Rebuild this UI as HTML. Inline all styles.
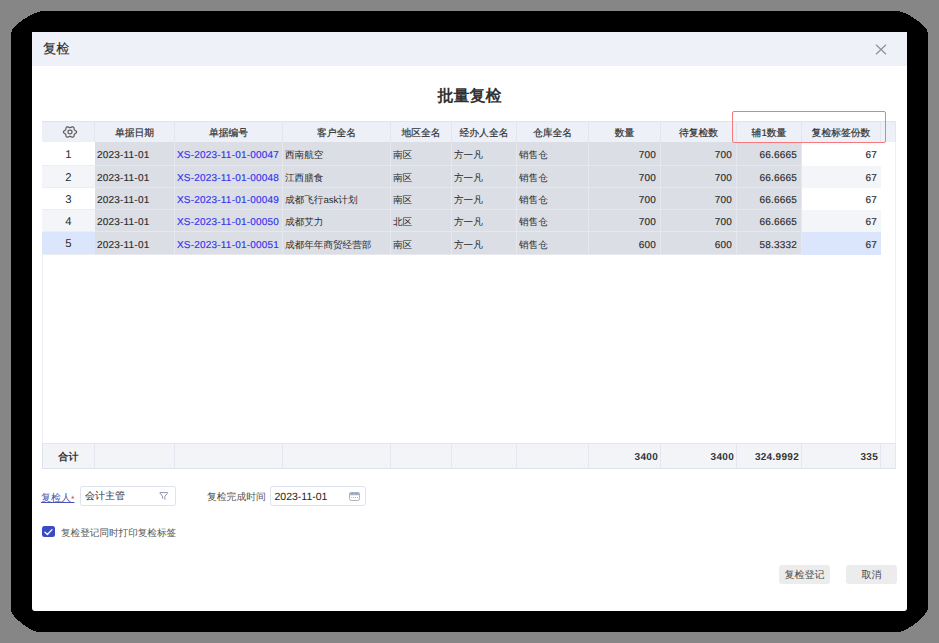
<!DOCTYPE html>
<html><head><meta charset="utf-8">
<style>
*{margin:0;padding:0;box-sizing:border-box}
html,body{width:939px;height:643px;overflow:hidden;background:#868686;text-rendering:geometricPrecision;font-family:"Liberation Sans",sans-serif;color:#333;position:relative}
body>*{position:absolute}
.frame{left:11px;top:11px;width:917px;height:621px}
.dlg{left:32px;top:32px;width:875px;height:579px;background:#fff;border-radius:0 0 3px 3px}
.hd{left:32px;top:32px;width:875px;height:34px;background:#eef1f8}
.hd .t{position:absolute;left:11px;top:9px;font-size:13.3px;line-height:16px;color:#2a2a2a;-webkit-text-stroke:0.15px #2a2a2a}
.x{left:875px;top:44px;width:12px;height:11px}
.title{left:32px;width:875px;top:87.3px;text-align:center;font-size:16px;line-height:20px;font-weight:bold;color:#333}
.tbl{left:42px;top:121px;width:854px;height:348px;border:1px solid #eceff5;background:#fff}
.c{font-size:10px;line-height:21px;white-space:nowrap;overflow:hidden}
.h{background:#edf0f7;text-align:center;color:#333;padding-top:1px;font-size:9.8px;-webkit-text-stroke:0.2px #333;border-right:1px solid #e2e6ee;border-top:1px solid #dfe3ec}
.h:first-of-type{}
.gear{position:absolute;left:20px;top:1.8px;width:16px;height:16px}
.ro{background:#dcdee5;border-right:1px solid #e6e8ee;border-bottom:1px solid #e6e8ee}
.odd{background:#fff}
.even{background:#f3f5f9}
.sel{background:#dbe5fb}
.num{text-align:center;font-size:11.3px;border-bottom:1px solid #eceef3}
.c.num{padding-top:1.2px}
.l{text-align:left;padding-left:2px}
.r{text-align:right;padding-right:4px}
.ctr{text-align:center}
.c.lk{color:#3232ee}
.ft{background:#f2f4f8;font-weight:bold;letter-spacing:0.3px;border-right:1px solid #e4e7ef;border-top:1px solid #e2e6ee;border-bottom:1px solid #dde2ec}
.ft.r{padding-right:2px}
.ft{padding-top:0.5px}
.redbox{left:732px;top:111px;width:154px;height:32px;border:1px solid #f6777c;border-radius:2px}
.lbl1{left:41px;top:491.5px;font-size:10px;line-height:14px;color:#4a53b6;text-decoration:underline}
.ast{color:#e04040;text-decoration:none;font-size:9px;vertical-align:top}
.inp{border:1px solid #dfe3ef;border-radius:3px;background:#fff}
.itxt{position:absolute;left:4px;top:3px;font-size:10px;line-height:13px;color:#333}
.num2{left:3.5px;font-size:10.5px;top:3.5px;color:#222}
.fil{position:absolute;left:78px;top:5.2px;width:11px;height:9px}
.cal{position:absolute;left:78px;top:5px;width:11px;height:9px}
.lbl2{left:207px;top:491px;font-size:9.8px;line-height:14px;color:#555}
.chk{left:42px;top:526px;width:13px;height:11px;background:#3b4bc5;border-radius:2.5px}
.chk svg{position:absolute;left:0;top:-0.5px;width:13px;height:12px}
.chklbl{left:61px;top:526.5px;font-size:9.6px;line-height:14px;color:#555}
.btn{height:19px;background:#ececec;border-radius:3px;text-align:center;font-size:10px;line-height:17.5px;padding-top:1.5px;color:#4a4a4a}

.zh{font-size:9.6px}
.nm{letter-spacing:0.2px;-webkit-text-stroke:0.15px currentColor}
.ro,.odd,.even,.sel{padding-top:1.5px;color:#2b2b2b}

</style></head><body>
<svg class="frame" width="917" height="621" viewBox="0 0 917 621" shape-rendering="crispEdges"><path d="M32 0H886C895.3 0 917 15.4 917 22V597C917 604.2 896 621 887 621H28C19.6 621 0 605.6 0 599V22C0 15.4 22.4 0 32 0Z" fill="#000"/></svg>
<div class="dlg"></div>
<div class="hd"><div class="t">复检</div></div>
<svg class="x" viewBox="0 0 12 11"><path d="M1 0.8L11 10.2M11 0.8L1 10.2" stroke="#8f949e" stroke-width="1.3" fill="none"/></svg>
<div class="title">批量复检</div>
<div class="tbl"></div>
<div class="c h" style="left:42px;top:121px;width:53px;height:21px"><svg class="gear" viewBox="0 0 16 16"><path d="M14.60 8.00 L14.47 8.49 L14.11 8.94 L13.60 9.31 L13.07 9.61 L12.63 9.88 L12.33 10.17 L12.18 10.55 L12.14 11.02 L12.10 11.57 L11.99 12.13 L11.72 12.63 L11.30 12.97 L10.74 13.12 L10.12 13.07 L9.50 12.87 L8.94 12.63 L8.45 12.43 L8.00 12.35 L7.55 12.43 L7.06 12.63 L6.50 12.87 L5.88 13.07 L5.26 13.12 L4.70 12.97 L4.28 12.63 L4.01 12.13 L3.90 11.57 L3.86 11.02 L3.82 10.55 L3.67 10.18 L3.37 9.88 L2.93 9.61 L2.40 9.31 L1.89 8.94 L1.53 8.49 L1.40 8.00 L1.53 7.51 L1.89 7.06 L2.40 6.69 L2.93 6.39 L3.37 6.12 L3.67 5.82 L3.82 5.45 L3.86 4.98 L3.90 4.43 L4.01 3.87 L4.28 3.37 L4.70 3.03 L5.26 2.88 L5.88 2.93 L6.50 3.13 L7.06 3.37 L7.55 3.57 L8.00 3.65 L8.45 3.57 L8.94 3.37 L9.50 3.13 L10.12 2.93 L10.74 2.88 L11.30 3.03 L11.72 3.37 L11.99 3.87 L12.10 4.43 L12.14 4.98 L12.18 5.45 L12.33 5.83 L12.63 6.12 L13.07 6.39 L13.60 6.69 L14.11 7.06 L14.47 7.51Z" fill="none" stroke="#5f5f5f" stroke-width="1.25"/><ellipse cx="8" cy="8" rx="2.05" ry="1.8" fill="none" stroke="#5f5f5f" stroke-width="1.25"/></svg></div>
<div class="c h" style="left:95px;top:121px;width:80px;height:21px">单据日期</div>
<div class="c h" style="left:175px;top:121px;width:108px;height:21px">单据编号</div>
<div class="c h" style="left:283px;top:121px;width:108px;height:21px">客户全名</div>
<div class="c h" style="left:391px;top:121px;width:61px;height:21px">地区全名</div>
<div class="c h" style="left:452px;top:121px;width:65px;height:21px">经办人全名</div>
<div class="c h" style="left:517px;top:121px;width:72px;height:21px">仓库全名</div>
<div class="c h" style="left:589px;top:121px;width:72px;height:21px">数量</div>
<div class="c h" style="left:661px;top:121px;width:76px;height:21px">待复检数</div>
<div class="c h" style="left:737px;top:121px;width:65px;height:21px">辅1数量</div>
<div class="c h" style="left:802px;top:121px;width:79px;height:21px">复检标签份数</div>
<div class="c h" style="left:881px;top:121px;width:15px;height:21px"></div>
<div class="c odd num" style="left:42px;top:142px;width:53px;height:24px;line-height:24px">1</div>
<div class="c ro l nm" style="left:95px;top:142px;width:80px;height:24px;line-height:24px">2023-11-01</div>
<div class="c ro l lk nm" style="left:175px;top:142px;width:108px;height:24px;line-height:24px">XS-2023-11-01-00047</div>
<div class="c ro l zh" style="left:283px;top:142px;width:108px;height:24px;line-height:24px">西南航空</div>
<div class="c ro l zh" style="left:391px;top:142px;width:61px;height:24px;line-height:24px">南区</div>
<div class="c ro l zh" style="left:452px;top:142px;width:65px;height:24px;line-height:24px">方一凡</div>
<div class="c ro l zh" style="left:517px;top:142px;width:72px;height:24px;line-height:24px">销售仓</div>
<div class="c ro r nm" style="left:589px;top:142px;width:72px;height:24px;line-height:24px">700</div>
<div class="c ro r nm" style="left:661px;top:142px;width:76px;height:24px;line-height:24px">700</div>
<div class="c ro r nm" style="left:737px;top:142px;width:65px;height:24px;line-height:24px">66.6665</div>
<div class="c odd r nm" style="left:802px;top:142px;width:79px;height:24px;line-height:24px">67</div>
<div class="c even num" style="left:42px;top:166px;width:53px;height:22px;line-height:22px">2</div>
<div class="c ro l nm" style="left:95px;top:166px;width:80px;height:22px;line-height:22px">2023-11-01</div>
<div class="c ro l lk nm" style="left:175px;top:166px;width:108px;height:22px;line-height:22px">XS-2023-11-01-00048</div>
<div class="c ro l zh" style="left:283px;top:166px;width:108px;height:22px;line-height:22px">江西膳食</div>
<div class="c ro l zh" style="left:391px;top:166px;width:61px;height:22px;line-height:22px">南区</div>
<div class="c ro l zh" style="left:452px;top:166px;width:65px;height:22px;line-height:22px">方一凡</div>
<div class="c ro l zh" style="left:517px;top:166px;width:72px;height:22px;line-height:22px">销售仓</div>
<div class="c ro r nm" style="left:589px;top:166px;width:72px;height:22px;line-height:22px">700</div>
<div class="c ro r nm" style="left:661px;top:166px;width:76px;height:22px;line-height:22px">700</div>
<div class="c ro r nm" style="left:737px;top:166px;width:65px;height:22px;line-height:22px">66.6665</div>
<div class="c even r nm" style="left:802px;top:166px;width:79px;height:22px;line-height:22px">67</div>
<div class="c odd num" style="left:42px;top:188px;width:53px;height:22px;line-height:22px">3</div>
<div class="c ro l nm" style="left:95px;top:188px;width:80px;height:22px;line-height:22px">2023-11-01</div>
<div class="c ro l lk nm" style="left:175px;top:188px;width:108px;height:22px;line-height:22px">XS-2023-11-01-00049</div>
<div class="c ro l zh" style="left:283px;top:188px;width:108px;height:22px;line-height:22px">成都飞行ask计划</div>
<div class="c ro l zh" style="left:391px;top:188px;width:61px;height:22px;line-height:22px">南区</div>
<div class="c ro l zh" style="left:452px;top:188px;width:65px;height:22px;line-height:22px">方一凡</div>
<div class="c ro l zh" style="left:517px;top:188px;width:72px;height:22px;line-height:22px">销售仓</div>
<div class="c ro r nm" style="left:589px;top:188px;width:72px;height:22px;line-height:22px">700</div>
<div class="c ro r nm" style="left:661px;top:188px;width:76px;height:22px;line-height:22px">700</div>
<div class="c ro r nm" style="left:737px;top:188px;width:65px;height:22px;line-height:22px">66.6665</div>
<div class="c odd r nm" style="left:802px;top:188px;width:79px;height:22px;line-height:22px">67</div>
<div class="c even num" style="left:42px;top:210px;width:53px;height:22px;line-height:22px">4</div>
<div class="c ro l nm" style="left:95px;top:210px;width:80px;height:22px;line-height:22px">2023-11-01</div>
<div class="c ro l lk nm" style="left:175px;top:210px;width:108px;height:22px;line-height:22px">XS-2023-11-01-00050</div>
<div class="c ro l zh" style="left:283px;top:210px;width:108px;height:22px;line-height:22px">成都艾力</div>
<div class="c ro l zh" style="left:391px;top:210px;width:61px;height:22px;line-height:22px">北区</div>
<div class="c ro l zh" style="left:452px;top:210px;width:65px;height:22px;line-height:22px">方一凡</div>
<div class="c ro l zh" style="left:517px;top:210px;width:72px;height:22px;line-height:22px">销售仓</div>
<div class="c ro r nm" style="left:589px;top:210px;width:72px;height:22px;line-height:22px">700</div>
<div class="c ro r nm" style="left:661px;top:210px;width:76px;height:22px;line-height:22px">700</div>
<div class="c ro r nm" style="left:737px;top:210px;width:65px;height:22px;line-height:22px">66.6665</div>
<div class="c even r nm" style="left:802px;top:210px;width:79px;height:22px;line-height:22px">67</div>
<div class="c sel num" style="left:42px;top:232px;width:53px;height:23px;line-height:23px">5</div>
<div class="c ro l nm" style="left:95px;top:232px;width:80px;height:23px;line-height:23px">2023-11-01</div>
<div class="c ro l lk nm" style="left:175px;top:232px;width:108px;height:23px;line-height:23px">XS-2023-11-01-00051</div>
<div class="c ro l zh" style="left:283px;top:232px;width:108px;height:23px;line-height:23px">成都年年商贸经营部</div>
<div class="c ro l zh" style="left:391px;top:232px;width:61px;height:23px;line-height:23px">南区</div>
<div class="c ro l zh" style="left:452px;top:232px;width:65px;height:23px;line-height:23px">方一凡</div>
<div class="c ro l zh" style="left:517px;top:232px;width:72px;height:23px;line-height:23px">销售仓</div>
<div class="c ro r nm" style="left:589px;top:232px;width:72px;height:23px;line-height:23px">600</div>
<div class="c ro r nm" style="left:661px;top:232px;width:76px;height:23px;line-height:23px">600</div>
<div class="c ro r nm" style="left:737px;top:232px;width:65px;height:23px;line-height:23px">58.3332</div>
<div class="c sel r nm" style="left:802px;top:232px;width:79px;height:23px;line-height:23px">67</div>
<div class="c ft ctr" style="border-left:1px solid #dde2ec;left:42px;top:443px;width:53px;height:26px;line-height:25px">合计</div>
<div class="c ft r" style="left:95px;top:443px;width:80px;height:26px;line-height:25px"></div>
<div class="c ft r" style="left:175px;top:443px;width:108px;height:26px;line-height:25px"></div>
<div class="c ft r" style="left:283px;top:443px;width:108px;height:26px;line-height:25px"></div>
<div class="c ft r" style="left:391px;top:443px;width:61px;height:26px;line-height:25px"></div>
<div class="c ft r" style="left:452px;top:443px;width:65px;height:26px;line-height:25px"></div>
<div class="c ft r" style="left:517px;top:443px;width:72px;height:26px;line-height:25px"></div>
<div class="c ft r" style="left:589px;top:443px;width:72px;height:26px;line-height:25px">3400</div>
<div class="c ft r" style="left:661px;top:443px;width:76px;height:26px;line-height:25px">3400</div>
<div class="c ft r" style="left:737px;top:443px;width:65px;height:26px;line-height:25px">324.9992</div>
<div class="c ft r" style="left:802px;top:443px;width:79px;height:26px;line-height:25px">335</div>
<div class="c ft r" style="left:881px;top:443px;width:15px;height:26px;line-height:25px"></div>
<div class="redbox"></div>
<div class="lbl1">复检人<span class="ast">*</span></div>
<div class="inp" style="left:80px;top:486px;width:96px;height:20px"><span class="itxt">会计主管</span><svg class="fil" viewBox="0 0 11 9"><path d="M1.3 0.6H8.3Q9.1 0.6 8.6 1.3L5.9 4.2V7.4M1.3 0.6Q0.5 0.6 1 1.3L3.5 4.2V6.3" fill="none" stroke="#8e95aa" stroke-width="1" stroke-linecap="round" stroke-linejoin="round"/></svg></div>
<div class="lbl2">复检完成时间</div>
<div class="inp" style="left:270px;top:486px;width:96px;height:20px"><span class="itxt num2">2023-11-01</span><svg class="cal" viewBox="0 0 11 9"><rect x="0.5" y="0.6" width="10" height="7.9" rx="1.6" fill="none" stroke="#aab0c3" stroke-width="0.95"/><rect x="0.5" y="0.6" width="10" height="2.6" rx="1" fill="#aab0c3"/><circle cx="3.3" cy="1.2" r="0.7" fill="#8e95ab"/><circle cx="7.5" cy="1.2" r="0.7" fill="#8e95ab"/><path d="M2.3 5.5H3.2M4.2 5.5H5.1M6.1 5.5H7M8 5.5H8.9" stroke="#aab0c3" stroke-width="1"/></svg></div>
<div class="chk"><svg viewBox="0 0 13 12"><path d="M3 6.2L5.4 8.5L10 3.6" fill="none" stroke="#fff" stroke-width="1.3" stroke-linecap="round" stroke-linejoin="round"/></svg></div>
<div class="chklbl">复检登记同时打印复检标签</div>
<div class="btn" style="left:779px;top:565px;width:51px">复检登记</div>
<div class="btn" style="left:846px;top:565px;width:51px">取消</div>
</body></html>
